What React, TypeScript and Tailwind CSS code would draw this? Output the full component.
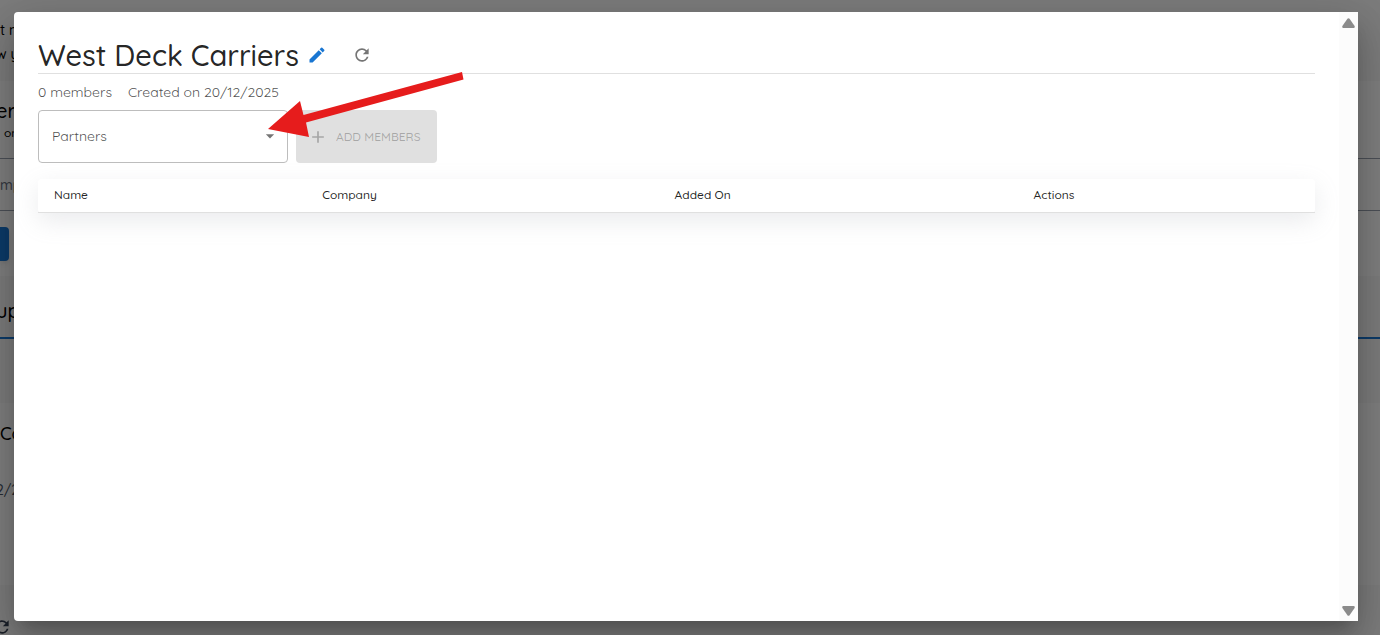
import { MdAdd, MdArrowDropDown, MdEdit, MdRefresh } from "react-icons/md";

const columns = [
  { label: "Name", width: "w-[21%]" },
  { label: "Company", width: "w-[27.6%]" },
  { label: "Added On", width: "w-[28.1%]" },
  { label: "Actions", width: "w-[23.3%]" },
];

// The groups page that sits under the dialog
const GroupsPage = () => {
  return (
    <div
      className="h-full overflow-hidden whitespace-nowrap bg-[#f9f9f9] text-black"
      aria-hidden="true"
    >
      <div className="h-[81px] pt-[18px] text-sm leading-6">
        <p>t m</p>
        <p className="-ml-1">w y</p>
      </div>
      <div className="h-[195px] bg-white pt-4">
        <h2 className="-ml-1 text-xl leading-7">er</h2>
        <p className="pl-1 text-xs leading-4">or</p>
        <div className="mt-[17px] flex h-[53px] items-center border-y border-gray-400 text-sm text-gray-500">
          mp
        </div>
        <div className="mt-4 h-[34px] w-[9px] rounded-r bg-[#1976d2] shadow-md" />
      </div>
      <div className="flex h-[63px] items-center border-b-2 border-[#1976d2] pt-2">
        <h2 className="-ml-1 text-xl">up</h2>
      </div>
      <div className="mt-16 h-[182px] bg-white pt-[17px]">
        <h3 className="text-lg leading-7">Ca</h3>
        <p className="-ml-1 mt-8 text-sm leading-5 text-gray-600">2/2</p>
      </div>
      <MdRefresh className="-ml-2 mt-8 text-gray-700" size={20} />
    </div>
  );
};

const ScrollRail = () => {
  return (
    <div className="flex w-[19px] shrink-0 flex-col items-center justify-between bg-[#fcfcfc] pb-[5px] pt-[6px]">
      <svg width="13" height="10" viewBox="0 0 13 10" fill="#8b8b8b">
        <path d="M5.4.8Q6.5-.4 7.6.8L12.6 8Q13.2 10 11.6 10H1.4Q-.2 10 .4 8Z" />
      </svg>
      <svg width="13" height="10" viewBox="0 0 13 10" fill="#8b8b8b">
        <path d="M5.4 9.2Q6.5 10.4 7.6 9.2L12.6 2Q13.2 0 11.6 0H1.4Q-.2 0 .4 2Z" />
      </svg>
    </div>
  );
};

const MembersTable = () => {
  return (
    <table className="mt-4 w-full table-fixed rounded bg-white text-left text-xs shadow-[0_8px_24px_rgba(149,157,165,0.2)]">
      <thead>
        <tr>
          {columns.map((col) => (
            <th
              key={col.label}
              className={`${col.width} h-[33px] border-b border-[#e0e0e0] px-4 font-medium text-black/87`}
            >
              {col.label}
            </th>
          ))}
        </tr>
      </thead>
      <tbody />
    </table>
  );
};

const App = () => {
  return (
    <div className="relative h-screen overflow-hidden font-['Quicksand','Lato',sans-serif] font-medium">
      <GroupsPage />

      <div className="absolute inset-0 flex bg-black/50 pb-[14px] pl-[14px] pr-[22px] pt-3">
        <div
          role="dialog"
          aria-labelledby="group-title"
          className="flex flex-1 overflow-hidden rounded-l bg-white shadow-[0_11px_15px_-7px_rgba(0,0,0,0.2),0_24px_38px_3px_rgba(0,0,0,0.14),0_9px_46px_8px_rgba(0,0,0,0.12)]"
        >
          <div className="min-w-0 flex-1 p-6">
            <div className="flex h-[38px] items-center border-b border-[#e0e0e0]">
              <h1 id="group-title" className="text-[29px] leading-8 text-black/87">
                West Deck Carriers
              </h1>
              <button aria-label="Edit name" className="ml-2 text-[#1976d2]">
                <MdEdit size={20} />
              </button>
              <button aria-label="Refresh" className="ml-[25px] text-black/54">
                <MdRefresh size={20} />
              </button>
            </div>

            <div className="flex h-9 items-center gap-4 text-sm font-normal text-black/70">
              <span>0 members</span>
              <span>Created on 20/12/2025</span>
            </div>

            <div className="flex gap-2">
              <div className="relative h-[53px] w-[250px]">
                <select
                  aria-label="Partners"
                  className="h-full w-full appearance-none rounded border border-[#bdbdbd] bg-white px-[13px] pb-[2px] text-sm font-normal text-black/70"
                >
                  <option>Partners</option>
                </select>
                <MdArrowDropDown
                  className="pointer-events-none absolute right-2 top-4 text-black/54"
                  size={20}
                />
              </div>
              <button
                disabled
                className="flex h-[53px] w-[141px] items-center gap-2 whitespace-nowrap rounded bg-[#e0e0e0] pl-3 text-xs font-medium text-black/26"
              >
                <MdAdd size={20} />
                ADD MEMBERS
              </button>
            </div>

            <MembersTable />
          </div>
          <ScrollRail />
        </div>
      </div>

      {/* Callout arrow to the partners field */}
      <svg
        className="pointer-events-none absolute left-[268px] top-[72px]"
        width="196"
        height="66"
        viewBox="0 0 196 66"
        fill="#e61c1c"
      >
        <path d="M194 0L195.500 7.500L38 50.500L41 65L0 57L32 29L35.500 43Z" />
      </svg>
    </div>
  );
};

export default App;
